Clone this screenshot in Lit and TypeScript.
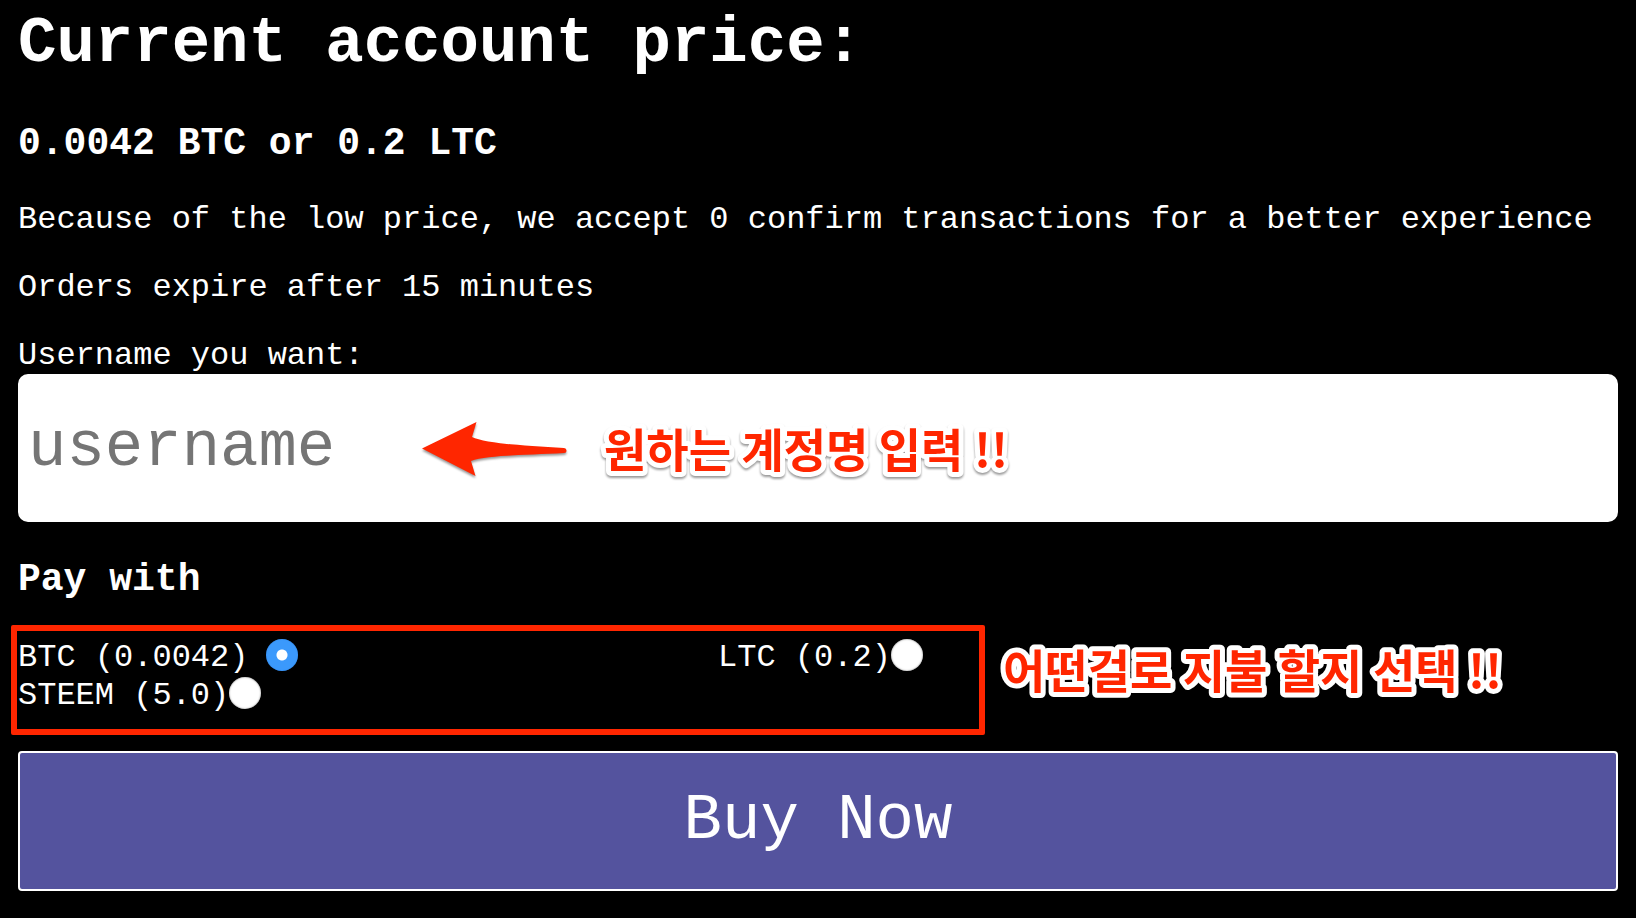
import { LitElement, html, css } from "lit";
import { customElement, state } from "lit/decorators.js";

interface Currency {
  id: string;
  label: string;
  spaced?: boolean;
}

const CURRENCIES: Currency[] = [
  { id: "btc", label: "BTC (0.0042)", spaced: true },
  { id: "ltc", label: "LTC (0.2)" },
  { id: "steem", label: "STEEM (5.0)" },
];

@customElement("app-root")
export class AppRoot extends LitElement {
  @state() private currency = "btc";

  static styles = css`
    :host {
      display: block;
      box-sizing: border-box;
      min-height: 100vh;
      padding: 8px 18px 24px;
      background: #000;
      color: #fff;
      font-family: "Courier New", "Liberation Mono", monospace;
      font-size: 32px;
      line-height: 36px;
    }

    * {
      box-sizing: border-box;
    }

    h1,
    h2,
    h3,
    p {
      margin: 0;
    }

    h1 {
      font-size: 64px;
      line-height: 72px;
      margin-bottom: 42px;
    }

    h2,
    h3 {
      font-size: 38px;
      line-height: 44px;
      margin-bottom: 36px;
    }

    p {
      margin-bottom: 32px;
    }

    .field {
      display: block;
    }

    .entry {
      position: relative;
      margin-bottom: 36px;
    }

    .username {
      display: block;
      width: 100%;
      margin: 0;
      padding: 36px 8px;
      border: 2px solid #fff;
      border-radius: 10px;
      background: #fff;
      color: #000;
      font: inherit;
      font-size: 64px;
      line-height: 72px;
      height: 148px;
    }

    .username::placeholder {
      color: #757575;
      opacity: 1;
    }

    .payment {
      position: relative;
      margin-bottom: 37px;
    }

    .options {
      display: grid;
      grid-template-columns: 7fr 9fr;
    }

    .option {
      display: flex;
      align-items: flex-end;
      height: 38px;
    }

    .spaced {
      gap: 18px;
    }

    .radio {
      appearance: none;
      flex: none;
      width: 32px;
      height: 32px;
      margin: 0 0 5px;
      border-radius: 50%;
      background: #fff;
      box-shadow: inset 0 0 2px #777;
    }

    .radio:checked {
      background: radial-gradient(circle, #fff 5px, #3b99fc 6px);
      box-shadow: inset 0 0 1px #2a7de0;
    }

    .buy {
      display: block;
      width: 100%;
      padding: 32px 12px;
      border: 2px solid #fff;
      border-radius: 4px;
      background: #54539e;
      color: #fff;
      font: inherit;
      font-size: 64px;
      line-height: 72px;
    }

    /* Hand-drawn style notes laid over the form */
    .note {
      position: absolute;
      width: 520px;
      height: 64px;
      overflow: visible;
      pointer-events: none;
      fill: #ff2600;
      stroke: #fff;
      stroke-width: 10px;
      stroke-linejoin: round;
      paint-order: stroke fill;
      font-family: "Noto Sans CJK KR", sans-serif;
      font-size: 46px;
      font-weight: 700;
      filter: drop-shadow(0 2px 1px rgba(0, 0, 0, 0.4));
    }

    .note-name {
      left: 586px;
      top: 47px;
    }

    .note-pay {
      left: 985px;
      top: 4px;
    }

    .arrow {
      position: absolute;
      left: 400px;
      top: 44px;
      width: 152px;
      height: 64px;
      pointer-events: none;
      filter: drop-shadow(0 2px 1px rgba(0, 0, 0, 0.4));
    }

    .frame {
      position: absolute;
      left: -7px;
      top: -13px;
      width: 974px;
      height: 110px;
      border: 6px solid #ff2600;
      border-radius: 2px;
      pointer-events: none;
    }
  `;

  render() {
    return html`
      <main>
        <h1>Current account price:</h1>
        <h2>0.0042 BTC or 0.2 LTC</h2>
        <p>Because of the low price, we accept 0 confirm transactions for a better experience</p>
        <p>Orders expire after 15 minutes</p>
        <form @submit=${(e: Event) => e.preventDefault()}>
          <label class="field" for="username">Username you want:</label>
          <div class="entry">
            <input class="username" id="username" type="text" placeholder="username" />
            <svg class="arrow" viewBox="0 0 152 64" aria-hidden="true">
              <path
                fill="#ff2600"
                d="M4 30.5 L58.5 4 L54 19 C66 25 106 28 146 30 Q148.5 30.3 148.5 32.5 Q148.5 35 146 35 C112 37 70 37 53 43 L57.5 58 Z"
              />
            </svg>
            <svg class="note note-name"><text x="0" y="46">원하는 계정명 입력 !!</text></svg>
          </div>
          <h3 id="pay-with">Pay with</h3>
          <div class="payment">
            <div class="options" role="radiogroup" aria-labelledby="pay-with">
              ${CURRENCIES.map(
                (c) => html`
                  <div class="option ${c.spaced ? "spaced" : ""}">
                    <label for=${c.id}>${c.label}</label>
                    <input
                      class="radio"
                      type="radio"
                      name="currency"
                      id=${c.id}
                      .checked=${this.currency === c.id}
                      @change=${() => (this.currency = c.id)}
                    />
                  </div>
                `
              )}
            </div>
            <div class="frame"></div>
            <svg class="note note-pay"><text x="0" y="46">어떤걸로 지불 할지 선택 !!</text></svg>
          </div>
          <button class="buy" type="submit">Buy Now</button>
        </form>
      </main>
    `;
  }
}
